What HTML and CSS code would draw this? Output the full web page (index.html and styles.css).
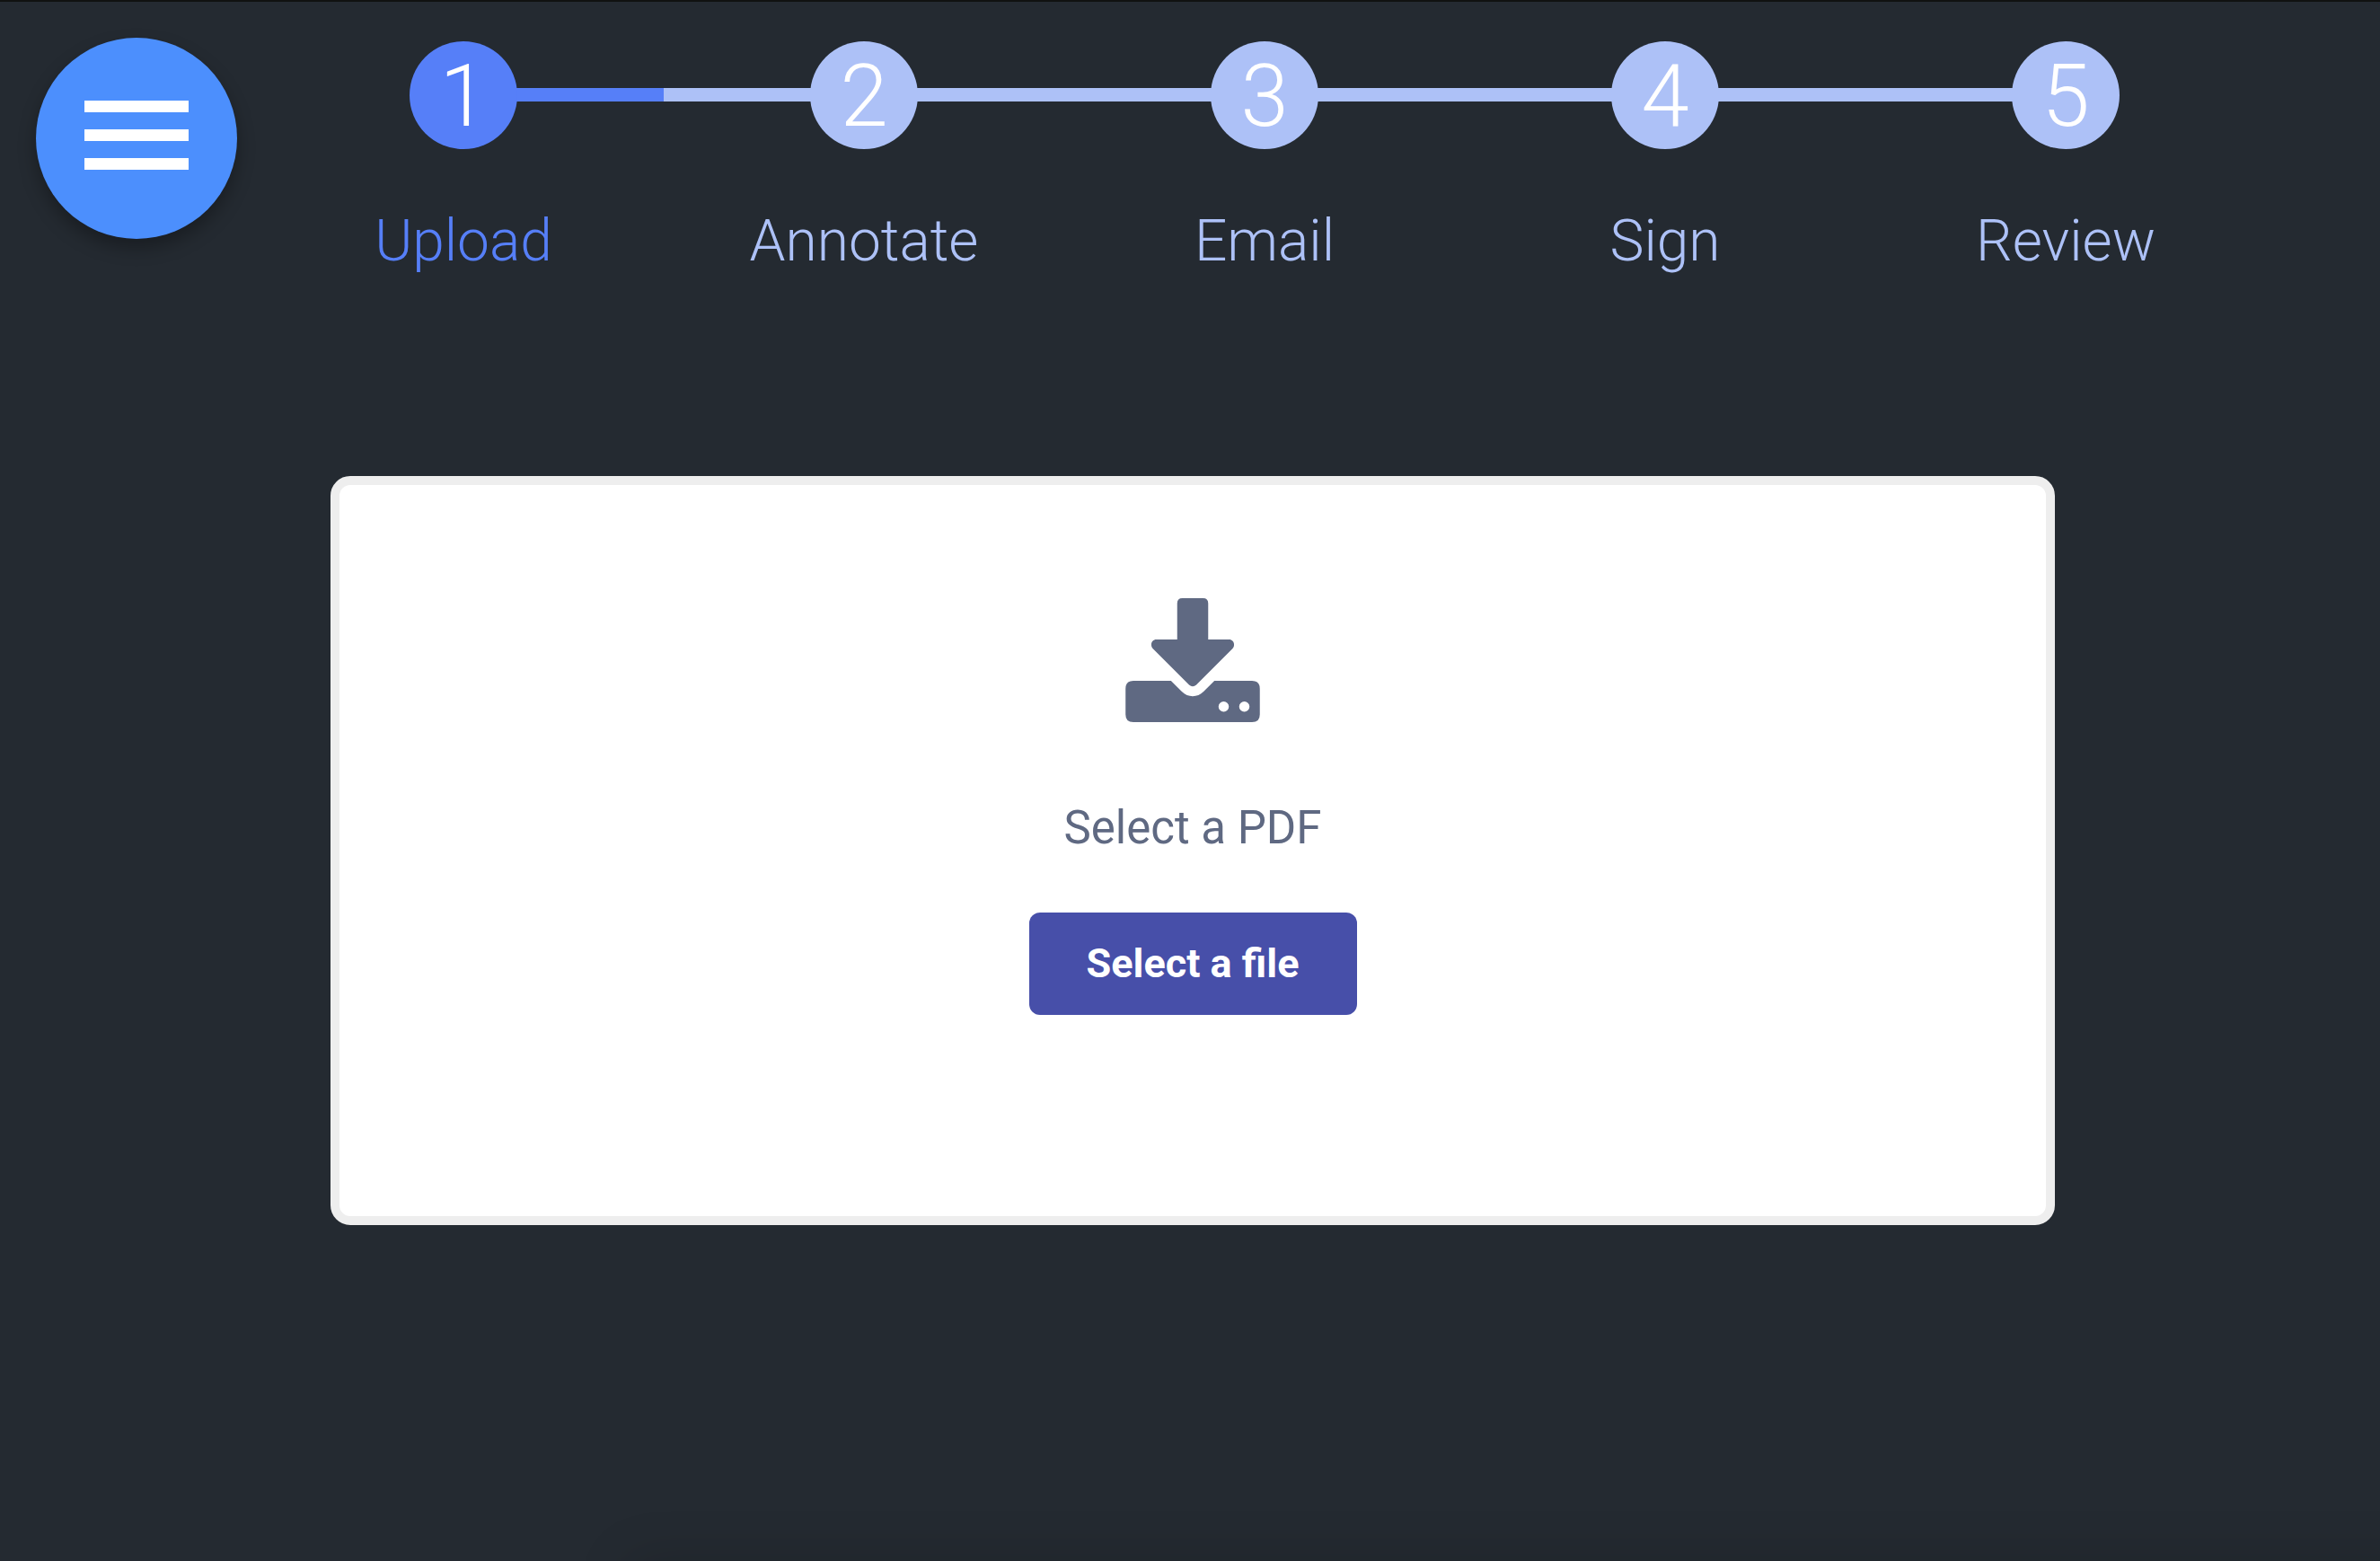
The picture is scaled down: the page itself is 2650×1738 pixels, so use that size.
FILE: index.html
```html
<!DOCTYPE html>
<html lang="en">
<head>
<meta charset="utf-8">
<meta name="viewport" content="width=device-width, initial-scale=1">
<title>Upload a PDF</title>
<link rel="stylesheet" href="styles.css">
</head>
<body>
<header class="header">
  <button class="menu-button" type="button" aria-label="Open menu">
    <svg class="menu-icon" viewBox="0 0 116 77" aria-hidden="true"><path d="M0 0h116v13H0zM0 32h116v13H0zM0 64h116v13H0z"/></svg>
  </button>
  <nav class="steps-nav" aria-label="Progress">
    <ol class="steps">
      <li class="step step-active" aria-current="step"><span class="step-number">1</span><span class="step-label">Upload</span></li>
      <li class="step"><span class="step-number">2</span><span class="step-label">Annotate</span></li>
      <li class="step"><span class="step-number">3</span><span class="step-label">Email</span></li>
      <li class="step"><span class="step-number">4</span><span class="step-label">Sign</span></li>
      <li class="step"><span class="step-number">5</span><span class="step-label">Review</span></li>
    </ol>
  </nav>
</header>
<main class="main">
  <section class="upload-panel">
    <svg class="download-icon" viewBox="0 0 26 24" aria-hidden="true">
      <path d="M11 0h4q1 0 1 1v7h4c1 0 1.300 1.100.700 1.800l-7 7q-.700.600-1.400 0l-7-7C4.700 9.100 5 8 6 8h4V1q0-1 1-1z"/>
      <path fill-rule="evenodd" d="M1.500 16h7.300l2.100 2.100c1.200 1.200 3 1.200 4.200 0l2.100-2.100h7.300q1.500 0 1.500 1.500v5q0 1.500-1.500 1.500h-23Q0 24 0 22.500v-5Q0 16 1.500 16zM18 21a1 1 0 1 0 2 0a1 1 0 1 0-2 0zM22 21a1 1 0 1 0 2 0a1 1 0 1 0-2 0z"/>
    </svg>
    <p class="upload-text">Select a PDF</p>
    <button class="file-button" type="button">Select a file</button>
  </section>
</main>
<div class="sheet"></div>
</body>
</html>
```
FILE: styles.css
```css
* {
  box-sizing: border-box;
}

body {
  min-height: 100vh;
  margin: 0;
  border-top: 2px solid #101211;
  background: #242a31;
  font-family: Roboto, "Liberation Sans", sans-serif;
}

.header {
  display: flex;
  align-items: flex-start;
  gap: 29px;
  padding: 40px 127px 0 40px;
}

.menu-button {
  display: grid;
  flex: none;
  place-items: center;
  width: 224px;
  height: 224px;
  padding: 0 0 8px;
  border: 0;
  border-radius: 50%;
  background: #4c8ffd;
  box-shadow: 0 10px 20px rgba(0, 0, 0, .3);
}

.menu-icon {
  width: 116px;
  height: 77px;
  fill: #fff;
}

.steps-nav {
  flex: 1;
  padding-top: 4px;
}

.steps {
  display: flex;
  margin: 0;
  padding: 0;
  list-style: none;
}

/* Each step paints its own half of the connecting line behind its circle. */
.step {
  display: flex;
  flex: 1;
  flex-direction: column;
  align-items: center;
  gap: 64px;
  background: linear-gradient(#adc1f7, #adc1f7) 0 52px / 100% 15px no-repeat;
  color: #adc1f7;
}

.step:first-child {
  background-image: linear-gradient(#567ff8, #567ff8);
  background-position: 100% 52px;
  background-size: 50% 15px;
}

.step:last-child {
  background-size: 50% 15px;
}

.step-active {
  color: #567ff8;
}

.step-number {
  width: 120px;
  height: 120px;
  border-radius: 50%;
  background: currentColor;
  font-size: 96px;
  font-weight: 300;
  line-height: 122px;
  text-align: center;
}

.step-number::first-line {
  color: #fff;
}

.step-label {
  font-size: 64px;
  font-weight: 300;
  line-height: 78px;
}

.main {
  display: flex;
  justify-content: center;
  padding: 222px 362px 0 368px;
}

.upload-panel {
  display: flex;
  flex: 1;
  flex-direction: column;
  align-items: center;
  padding: 126px 24px 224px;
  border: 10px solid #eee;
  border-radius: 22px;
  background: #fff;
  color: #5f6982;
}

.download-icon {
  width: 150px;
  height: 138px;
  fill: currentColor;
}

.upload-text {
  margin: 88px 0 64px;
  font-size: 51px;
  line-height: 60px;
}

.file-button {
  padding: 30px 64px;
  border: 0;
  border-radius: 12px;
  background: #474fa9;
  color: #fff;
  font-family: inherit;
  font-size: 45px;
  font-weight: 700;
  line-height: 54px;
}

/* Collapsed sheet: rests below the window, only its shadow shows. */
.sheet {
  position: fixed;
  top: 100%;
  right: -64px;
  left: 700px;
  height: 64px;
  box-shadow: 0 0 60px rgba(0, 0, 0, .15);
}
```
